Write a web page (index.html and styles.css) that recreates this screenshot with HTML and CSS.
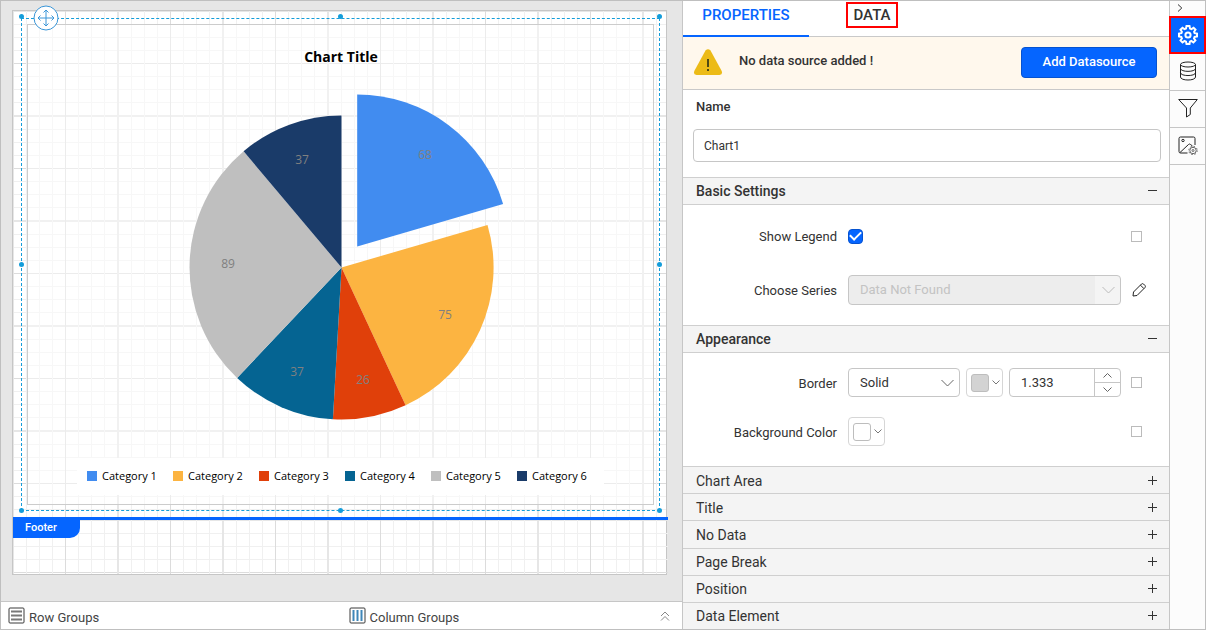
FILE: index.html
```html
<!DOCTYPE html>
<html lang="en">
<head>
<meta charset="utf-8">
<title>Report Designer</title>
<link rel="stylesheet" href="styles.css">
</head>
<body>
<div class="app">
  <main class="designer">
    <div class="workspace">
      <div class="page">
        <section class="page-body grid-lines">
          <div class="chart-item">
            <svg class="chart" viewBox="28 25 625 479" role="img" aria-label="Chart Title">
              <text class="chart-title" x="341" y="62">Chart Title</text>
              <g class="slices">
                <path fill="#418cf0" d="M357.2 246.5V94.5A152 152 0 0 1 503.1 203.9Z"/>
                <path fill="#fcb441" d="M341.500 267.500L487.500 224.900A152 152 0 0 1 405.600 405.300Z"/>
                <path fill="#e0400a" d="M341.500 267.500L405.600 405.300A152 152 0 0 1 332.900 419.300Z"/>
                <path fill="#056492" d="M341.500 267.500L332.900 419.300A152 152 0 0 1 237.100 378Z"/>
                <path fill="#bfbfbf" d="M341.500 267.500L237.100 378A152 152 0 0 1 243.600 151.300Z"/>
                <path fill="#1a3b69" d="M341.500 267.500L243.600 151.300A152 152 0 0 1 341.500 115.500Z"/>
              </g>
              <g class="values">
                <text x="425" y="159">68</text>
                <text x="445" y="319">75</text>
                <text x="363" y="384">26</text>
                <text x="297" y="376">37</text>
                <text x="228" y="268">89</text>
                <text x="302" y="164">37</text>
              </g>
              <rect x="77" y="458" width="527" height="37" fill="#fff"/>
              <g class="legend">
                <rect x="87" y="471" width="10" height="10" fill="#418cf0"/><text x="102" y="480">Category 1</text>
                <rect x="173" y="471" width="10" height="10" fill="#fcb441"/><text x="188" y="480">Category 2</text>
                <rect x="259" y="471" width="10" height="10" fill="#e0400a"/><text x="274" y="480">Category 3</text>
                <rect x="345" y="471" width="10" height="10" fill="#056492"/><text x="360" y="480">Category 4</text>
                <rect x="431" y="471" width="10" height="10" fill="#bfbfbf"/><text x="446" y="480">Category 5</text>
                <rect x="517" y="471" width="10" height="10" fill="#1a3b69"/><text x="532" y="480">Category 6</text>
              </g>
            </svg>
            <i class="handle top left"></i><i class="handle top center"></i><i class="handle top right"></i>
            <i class="handle middle left"></i><i class="handle middle right"></i>
            <i class="handle bottom left"></i><i class="handle bottom center"></i><i class="handle bottom right"></i>
            <svg class="move" viewBox="0 0 26 26"><circle cx="13" cy="13" r="12"/><path d="M13 5v16M5 13h16M10.500 7.500L13 5l2.500 2.500M10.500 18.500L13 21l2.500-2.500M7.500 10.500L5 13l2.500 2.500M18.500 10.500L21 13l-2.500 2.500"/></svg>
          </div>
        </section>
        <section class="page-footer grid-lines"><span class="footer-tag">Footer</span></section>
      </div>
    </div>
    <div class="groups">
      <div class="group">
        <svg class="group-icon" viewBox="0 0 17 17"><rect x="1" y="1" width="15" height="15" rx="1"/><path class="rows" d="M3 4.500h11M3 8.500h11M3 12.500h11"/></svg>
        <span>Row Groups</span>
      </div>
      <div class="group">
        <svg class="group-icon" viewBox="0 0 17 17"><rect x="1" y="1" width="15" height="15" rx="1"/><path class="cols" d="M4.500 3v11M8.500 3v11M12.500 3v11"/></svg>
        <span>Column Groups</span>
        <button class="expand" aria-label="Expand groups"><svg viewBox="0 0 10 10"><path d="M1 5l4-4 4 4M1 9.500l4-4 4 4"/></svg></button>
      </div>
    </div>
  </main>

  <aside class="properties">
    <nav class="tabs">
      <button class="tab active">PROPERTIES</button>
      <button class="tab"><span class="marked">DATA</span></button>
    </nav>
    <div class="notice">
      <svg class="warning" viewBox="0 0 30 26"><path fill="#ecbb17" d="M12.500 1.500q2.500-2.500 5 0L28.700 22q1.300 3.500-2.200 4H3.500Q0 25.500 1.300 22Z"/><path stroke="#4f4a14" stroke-width="2" d="M15 10v8M15 20v2"/></svg>
      <span class="notice-text">No data source added !</span>
      <button class="primary">Add Datasource</button>
    </div>
    <div class="name-block">
      <label class="name-label" for="name">Name</label>
      <input class="name-input" id="name" type="text" value="Chart1">
    </div>

    <button class="section-head open">Basic Settings<svg viewBox="0 0 9 9"><path d="M0 4.500h9"/></svg></button>
    <div class="fields basic">
      <label for="legend">Show Legend</label>
      <div class="controls"><input class="tick" id="legend" type="checkbox" checked></div>
      <input class="pick" type="checkbox" aria-label="Expression for Show Legend">
      <label for="series">Choose Series</label>
      <select class="select disabled" id="series" disabled><option>Data Not Found</option></select>
      <button class="edit" aria-label="Edit series"><svg viewBox="0 0 16 16"><path d="M2 14l.5-4L10.500 2q1-.8 2 0l1.500 1.500q.8 1 0 2L6 13.500ZM9.500 3.200L12.800 6.500"/></svg></button>
    </div>

    <button class="section-head open">Appearance<svg viewBox="0 0 9 9"><path d="M0 4.500h9"/></svg></button>
    <div class="fields appearance">
      <label for="border">Border</label>
      <div class="controls">
        <select class="select" id="border"><option>Solid</option></select>
        <button class="color" aria-label="Border color"><span class="swatch gray"></span><svg viewBox="0 0 8 5"><path d="M.5.500L4 4 7.500.500"/></svg></button>
        <div class="spinner">
          <input type="text" value="1.333" aria-label="Border width">
          <div class="steps">
            <button aria-label="Increase"><svg viewBox="0 0 9 5"><path d="M.5 4.500l4-4 4 4"/></svg></button>
            <button aria-label="Decrease"><svg viewBox="0 0 9 5"><path d="M.5.500l4 4 4-4"/></svg></button>
          </div>
        </div>
      </div>
      <input class="pick" type="checkbox" aria-label="Expression for Border">
      <label for="background">Background Color</label>
      <div class="controls"><button class="color" id="background"><span class="swatch"></span><svg viewBox="0 0 8 5"><path d="M.5.500L4 4 7.500.500"/></svg></button></div>
      <input class="pick" type="checkbox" aria-label="Expression for Background Color">
    </div>

    <div class="collapsed">
      <button class="section-head">Chart Area<svg viewBox="0 0 9 9"><path d="M0 4.500h9M4.500 0v9"/></svg></button>
      <button class="section-head">Title<svg viewBox="0 0 9 9"><path d="M0 4.500h9M4.500 0v9"/></svg></button>
      <button class="section-head">No Data<svg viewBox="0 0 9 9"><path d="M0 4.500h9M4.500 0v9"/></svg></button>
      <button class="section-head">Page Break<svg viewBox="0 0 9 9"><path d="M0 4.500h9M4.500 0v9"/></svg></button>
      <button class="section-head">Position<svg viewBox="0 0 9 9"><path d="M0 4.500h9M4.500 0v9"/></svg></button>
      <button class="section-head">Data Element<svg viewBox="0 0 9 9"><path d="M0 4.500h9M4.500 0v9"/></svg></button>
    </div>
  </aside>

  <nav class="rail">
    <button class="collapse" aria-label="Collapse panel"><svg viewBox="0 0 6 8"><path d="M1 .500L4.800 4 1 7.500"/></svg></button>
    <button class="tool active" aria-label="Properties">
      <svg viewBox="0 0 20 20"><path d="M8.500 1h3l.5 2.500 1.500.6L15.600 2.700l1.900 2L16.100 6.800l.5 1.400 2.400.4v2.800l-2.400.5-.6 1.500 1.400 2-2 2-2.100-1.400-1.400.6L11.500 19h-3L8 16.600l-1.400-.6-2.100 1.400-2-2 1.400-2-.6-1.500L1 11.400V8.600l2.400-.4.5-1.400L2.500 4.700l2-2L6.500 4.100 8 3.500Z"/><circle cx="10" cy="10" r="2.600"/></svg>
    </button>
    <button class="tool" aria-label="Data sources">
      <svg viewBox="0 0 20 20"><ellipse cx="10" cy="3.500" rx="7.500" ry="2.500"/><path d="M2.500 3.500v12.500c0 4 15 4 15 0V3.500M2.500 7.500c0 3.800 15 3.800 15 0M2.500 11.700c0 3.800 15 3.800 15 0"/></svg>
    </button>
    <button class="tool" aria-label="Filters">
      <svg viewBox="0 0 20 20"><path d="M.700 1.500h18.600l-7 8.500v6.500L8.500 19v-9Z"/></svg>
    </button>
    <button class="tool" aria-label="Image settings">
      <svg viewBox="0 0 20 20"><path d="M9.500 18H2.500q-1.500 0-1.500-1.500v-13Q1 2 2.500 2h13Q17 2 17 3.500V10M2 17.500L10.500 9.500q1-1 2 0l2 1.500"/><circle cx="5" cy="5.500" r="1.200"/><g class="small"><circle cx="15" cy="15.500" r="3.200"/><circle cx="15" cy="15.500" r="1"/><circle cx="15" cy="15.500" r="4.200" stroke-dasharray="1.600 1.700"/></g></svg>
    </button>
  </nav>
</div>
</body>
</html>
```

FILE: styles.css
```css
* { box-sizing: border-box; }

body {
  margin: 0;
  font: 13px/20px Roboto, sans-serif;
  color: #333;
}

button, input, select {
  margin: 0;
  padding: 0;
  font: inherit;
  color: inherit;
  background: none;
  border: 0;
}

svg {
  flex: none;
  fill: none;
  stroke: currentColor;
}

.app {
  display: flex;
  height: 100vh;
  border: 1px solid #bfbfbf;
  background: #fff;
}

/* Design surface */
.designer {
  flex: 1;
  min-width: 0;
  display: flex;
  flex-direction: column;
}

.workspace {
  flex: 1;
  min-height: 0;
  display: flex;
  padding: 9px 15px 26px 11px;
  background: #e6e6e6;
}

.page {
  flex: 1;
  min-width: 0;
  display: flex;
  flex-direction: column;
  background: #fff;
  border: 1px solid #c6c6c6;
}

.grid-lines {
  --major: #dcdcdc;
  --soft: #e6e6e6;
  --minor: #f0f0f0;
  --stops: var(--soft) 0 1px, transparent 1px 13px, var(--minor) 13px 14px, transparent 14px 26px,
    var(--minor) 26px 27px, transparent 27px 39px, var(--minor) 39px 40px, transparent 40px 52px,
    var(--major) 52px 53px, transparent 53px 65px, var(--minor) 65px 66px, transparent 66px 78px,
    var(--minor) 78px 79px, transparent 79px 91px, var(--minor) 91px 92px, transparent 92px 104px,
    var(--soft) 104px 105px;
  background-image: linear-gradient(to right, var(--stops)), linear-gradient(to bottom, var(--stops));
  background-size: 105px 105px;
}

.page-body {
  flex: 1;
  min-height: 0;
  display: flex;
  padding: 7px 6px 6px 8px;
}

.chart-item {
  position: relative;
  flex: 1;
  min-width: 0;
  display: flex;
  padding: 5px;
  border: 1px dashed #149dda;
}

.chart {
  flex: 1;
  min-width: 0;
  width: 100%;
  height: 100%;
  stroke: none;
  background: rgba(255, 255, 255, .45);
  border: 1px solid #ccc;
  font-family: "Open Sans", "Noto Sans", sans-serif;
  font-size: 12px;
}

.chart-title { font-size: 14px; font-weight: 700; text-anchor: middle; fill: #000; }
.values { fill: #808080; text-anchor: middle; }
.legend { fill: #000; font-size: 11px; }

.handle {
  position: absolute;
  width: 5px;
  height: 5px;
  border-radius: 50%;
  background: #149dda;
}
.top { top: -5px; }
.middle { top: calc(50% - 3px); }
.bottom { bottom: -3px; }
.left { left: -3px; }
.center { left: calc(50% - 3px); }
.right { right: -3px; }

.move {
  position: absolute;
  left: 11px;
  top: -14px;
  width: 26px;
  height: 26px;
  stroke: #3a96d8;
}
.move circle { fill: #fff; }

.page-footer {
  height: 57px;
  margin-right: -2px;
  border-top: 3px solid #0565ff;
}

.footer-tag {
  display: block;
  width: 67px;
  height: 18px;
  padding-left: 12px;
  border-bottom-right-radius: 10px;
  background: #0565ff;
  color: #fff;
  font-size: 11px;
  font-weight: 500;
  line-height: 16px;
}

.groups {
  display: grid;
  grid-template-columns: 1fr 1fr;
  height: 28px;
  border-top: 1px solid #c6c6c6;
  background: #fff;
}

.group {
  display: flex;
  align-items: center;
  gap: 4px;
  padding: 0 12px 0 7px;
  color: #444;
}
.group span { padding-top: 4px; }
.group-icon { width: 17px; height: 17px; stroke: #3a3a3a; }
.group-icon .rows { stroke: #777; stroke-width: 2; }
.group-icon .cols { stroke: #3f86b8; stroke-width: 2; }

.expand { width: 10px; margin-left: auto; color: #888; line-height: 0; }
.expand svg { width: 10px; height: 10px; }

/* Properties panel */
.properties {
  width: 487px;
  display: flex;
  flex-direction: column;
  border-left: 1px solid #c6c6c6;
}

.tabs {
  display: flex;
  height: 36px;
  border-bottom: 1px solid #c9c9c9;
}

.tab {
  width: 126px;
  height: 36px;
  padding-bottom: 8px;
  font-size: 15px;
  font-weight: 500;
}
.tab.active { color: #0565ff; border-bottom: 2px solid #0565ff; padding-bottom: 6px; }

.marked {
  display: inline-block;
  padding: 1px 5px;
  border: 2px solid #f00;
}

.notice {
  display: flex;
  align-items: center;
  height: 53px;
  padding: 0 12px 2px 10px;
  background: #fff8ed;
  border-bottom: 1px solid #c9c9c9;
}
.warning { width: 30px; height: 26px; stroke: none; }
.notice-text { flex: 1; padding: 0 0 2px 16px; font-weight: 500; }

.primary {
  width: 136px;
  height: 31px;
  border: 1px solid #0552d0;
  border-radius: 4px;
  background: #0565ff;
  color: #fff;
  font-weight: 500;
}

.name-block {
  display: flex;
  flex-direction: column;
  gap: 12px;
  height: 87px;
  padding: 7px 8px 15px 10px;
}
.name-label { padding-left: 3px; font-weight: 500; }
.name-input {
  height: 33px;
  flex: none;
  padding: 0 10px;
  border: 1px solid #c6c6c6;
  border-radius: 4px;
  font-size: 12px;
}

.section-head {
  display: flex;
  align-items: center;
  justify-content: space-between;
  width: 100%;
  padding: 0 12px 0 13px;
  border-top: 1px solid #cfcfcf;
  background: #f4f4f4;
  font-size: 14px;
  text-align: left;
}
.section-head.open {
  height: 28px;
  border-bottom: 1px solid #cfcfcf;
  font-weight: 500;
}
.section-head svg { width: 9px; height: 9px; margin-bottom: 1px; }

.fields {
  display: grid;
  grid-template-columns: 154px 273px 1fr;
  column-gap: 10px;
  padding-left: 1px;
  align-items: center;
}
.fields label { padding: 2px 1px 0 0; text-align: right; }
.basic { grid-template-rows: 30px 30px; row-gap: 24px; padding-top: 16px; padding-bottom: 20px; }
.appearance { grid-template-rows: 29px 29px; row-gap: 20px; padding-top: 15px; padding-bottom: 20px; }

.controls { display: flex; justify-content: space-between; align-items: center; }

.tick, .pick { appearance: none; flex: none; }
.tick {
  width: 15px;
  height: 15px;
  border: 1px solid #0552d0;
  border-radius: 4px;
  background: #0565ff;
  display: grid;
  place-items: center;
}
.tick:checked::before {
  content: "";
  width: 9px;
  height: 5px;
  margin-bottom: 3px;
  border: solid #fff;
  border-width: 0 0 2px 2px;
  rotate: -45deg;
}
.pick { width: 11px; height: 11px; border: 1px solid #bbb; }

.select {
  appearance: none;
  width: 112px;
  height: 29px;
  padding: 0 11px;
  border: 1px solid #c6c6c6;
  border-radius: 4px;
  background: #fff url("data:image/svg+xml,%3Csvg xmlns='http://www.w3.org/2000/svg' width='13' height='8' fill='none' stroke='%23666'%3E%3Cpath d='M.5 1l6 6 6-6'/%3E%3C/svg%3E") no-repeat right 5px center;
}
.select.disabled {
  width: 100%;
  height: 30px;
  color: #c3c3c3;
  opacity: 1;
  background: url("data:image/svg+xml,%3Csvg xmlns='http://www.w3.org/2000/svg' width='13' height='8' fill='none' stroke='%23bbb'%3E%3Cpath d='M.5 1l6 6 6-6'/%3E%3C/svg%3E") no-repeat right 5px center,
    linear-gradient(#f4f4f4, #f4f4f4) no-repeat right / 25px 100%, #ededed;
}

.edit { width: 16px; height: 16px; line-height: 0; }
.edit svg { width: 16px; height: 16px; stroke: #222; }

.color {
  display: flex;
  align-items: center;
  justify-content: space-between;
  width: 37px;
  height: 29px;
  padding: 0 2px 0 4px;
  border: 1px solid #d6d6d6;
  border-radius: 4px;
  color: #777;
}
.color svg { width: 8px; height: 5px; }
.swatch { width: 18px; height: 18px; border: 1px solid #bdbdbd; border-radius: 3px; }
.swatch.gray { background: #d3d3d3; }

.spinner {
  display: flex;
  width: 112px;
  height: 29px;
  border: 1px solid #c6c6c6;
  border-radius: 4px;
  overflow: hidden;
}
.spinner input { flex: 1; min-width: 0; padding-left: 11px; }
.steps {
  display: grid;
  width: 26px;
  border-left: 1px solid #c6c6c6;
}
.steps button { line-height: 0; color: #666; }
.steps button + button { border-top: 1px solid #c6c6c6; }
.steps svg { width: 9px; height: 5px; }

.collapsed { flex: 1; display: flex; flex-direction: column; }
.collapsed .section-head { flex: 1; padding-top: 1px; }

/* Tool rail */
.rail {
  width: 36px;
  display: flex;
  flex-direction: column;
  border-left: 1px solid #c6c6c6;
  background: #fcfcfc;
}
.collapse { height: 15px; padding: 0 0 2px 7px; text-align: left; line-height: 0; }
.collapse svg { width: 6px; height: 8px; }
.tool {
  display: grid;
  place-items: center;
  height: 37px;
  padding-bottom: 3px;
  border-bottom: 1px solid #c6c6c6;
}
.tool svg { width: 20px; height: 20px; stroke: #222; }
.tool .small { stroke: #666; }
.tool.active {
  height: 38px;
  margin: 0 -1px;
  padding: 0;
  border: 2px solid #f00;
  background: #0565ff;
}
.tool.active svg { stroke: #fff; stroke-width: 2; }
```
